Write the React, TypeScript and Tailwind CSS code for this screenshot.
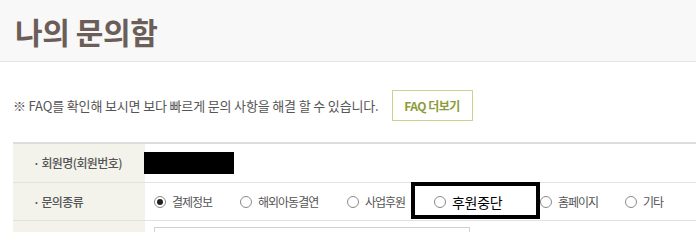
import React from "react";

const font = { fontFamily: '"Noto Sans CJK KR", "Noto Sans", sans-serif' };

// 문의종류 라디오 항목
const types = [
  { label: "결제정보", checked: true, w: "w-[86px]" },
  { label: "해외아동결연", checked: false, w: "w-[107px]" },
  { label: "사업후원", checked: false, w: "w-[87px]" },
  { label: "후원중단", checked: false, w: "w-[106px]", big: true },
  { label: "홈페이지", checked: false, w: "w-[85px]" },
  { label: "기타", checked: false, w: "w-[60px]" },
];

function Radio({ checked }: { checked: boolean }) {
  return (
    <span className="flex h-[12px] w-[12px] shrink-0 items-center justify-center rounded-full border border-[#8a8a8a] bg-white">
      {checked && <span className="h-[6px] w-[6px] rounded-full bg-[#222]" />}
    </span>
  );
}

export default function App() {
  return (
    <div className="h-[250px] w-[696px] overflow-hidden bg-white" style={font}>
      {/* 상단 타이틀 */}
      <div className="h-[62px] border-b border-[#e4e4e4] bg-[#f8f8f8] pl-[15px] pt-[12px]">
        <h1 className="text-[30px] font-bold leading-[38px] tracking-[-0.4px] text-[#6b5e58]">나의 문의함</h1>
      </div>

      <div className="pl-[13px]">
        {/* 안내 문구 */}
        <div className="flex h-[80px] items-center pt-[7px]">
          <p className="text-[13px] tracking-[-0.15px] text-[#555]">
            ※ FAQ를 확인해 보시면 보다 빠르게 문의 사항을 해결 할 수 있습니다.
          </p>
          <button className="ml-[13px] flex h-[31px] w-[81px] items-center justify-center border border-[#c9d58f] text-[12px] font-bold tracking-[-0.5px] text-[#8c9c3c]">
            FAQ 더보기
          </button>
        </div>

        {/* 문의 폼 */}
        <div className="border-t-2 border-[#dcdcdc]">
          <div className="flex h-[39px] border-b border-[#e2e2e2]">
            <div className="flex w-[132px] items-center bg-[#f3f3ec] pl-[20px] text-[12px] font-medium tracking-[-0.6px] text-[#555]">
              · 회원명(회원번호)
            </div>
            <div className="flex items-center">
              <div className="ml-[-1px] h-[22px] w-[90px] bg-black" />
            </div>
          </div>

          <div className="relative flex h-[38px] border-b border-[#e2e2e2]">
            <div className="flex w-[132px] items-center bg-[#f3f3ec] pl-[20px] text-[12px] font-medium tracking-[-0.6px] text-[#555]">
              · 문의종류
            </div>
            <div className="flex items-center pl-[9px]">
              {types.map((t) => (
                <label key={t.label} className={`flex items-center gap-[6px] ${t.w}`}>
                  <Radio checked={t.checked} />
                  <span
                    className={
                      t.big
                        ? "text-[14px] leading-none tracking-[-0.3px] text-black"
                        : "text-[12px] leading-none tracking-[-1px] text-[#555]"
                    }
                  >
                    {t.label}
                  </span>
                </label>
              ))}
            </div>
            {/* 강조 박스 */}
            <div className="absolute left-[398px] top-[-1px] h-[37px] w-[129px] border-4 border-black" />
          </div>

          <div className="flex h-[11px] overflow-hidden">
            <div className="w-[132px] bg-[#f3f3ec]" />
            <div className="pl-[9px] pt-[6px]">
              <div className="h-[30px] w-[316px] border border-[#d0d0d0]" />
            </div>
          </div>
        </div>
      </div>
    </div>
  );
}
